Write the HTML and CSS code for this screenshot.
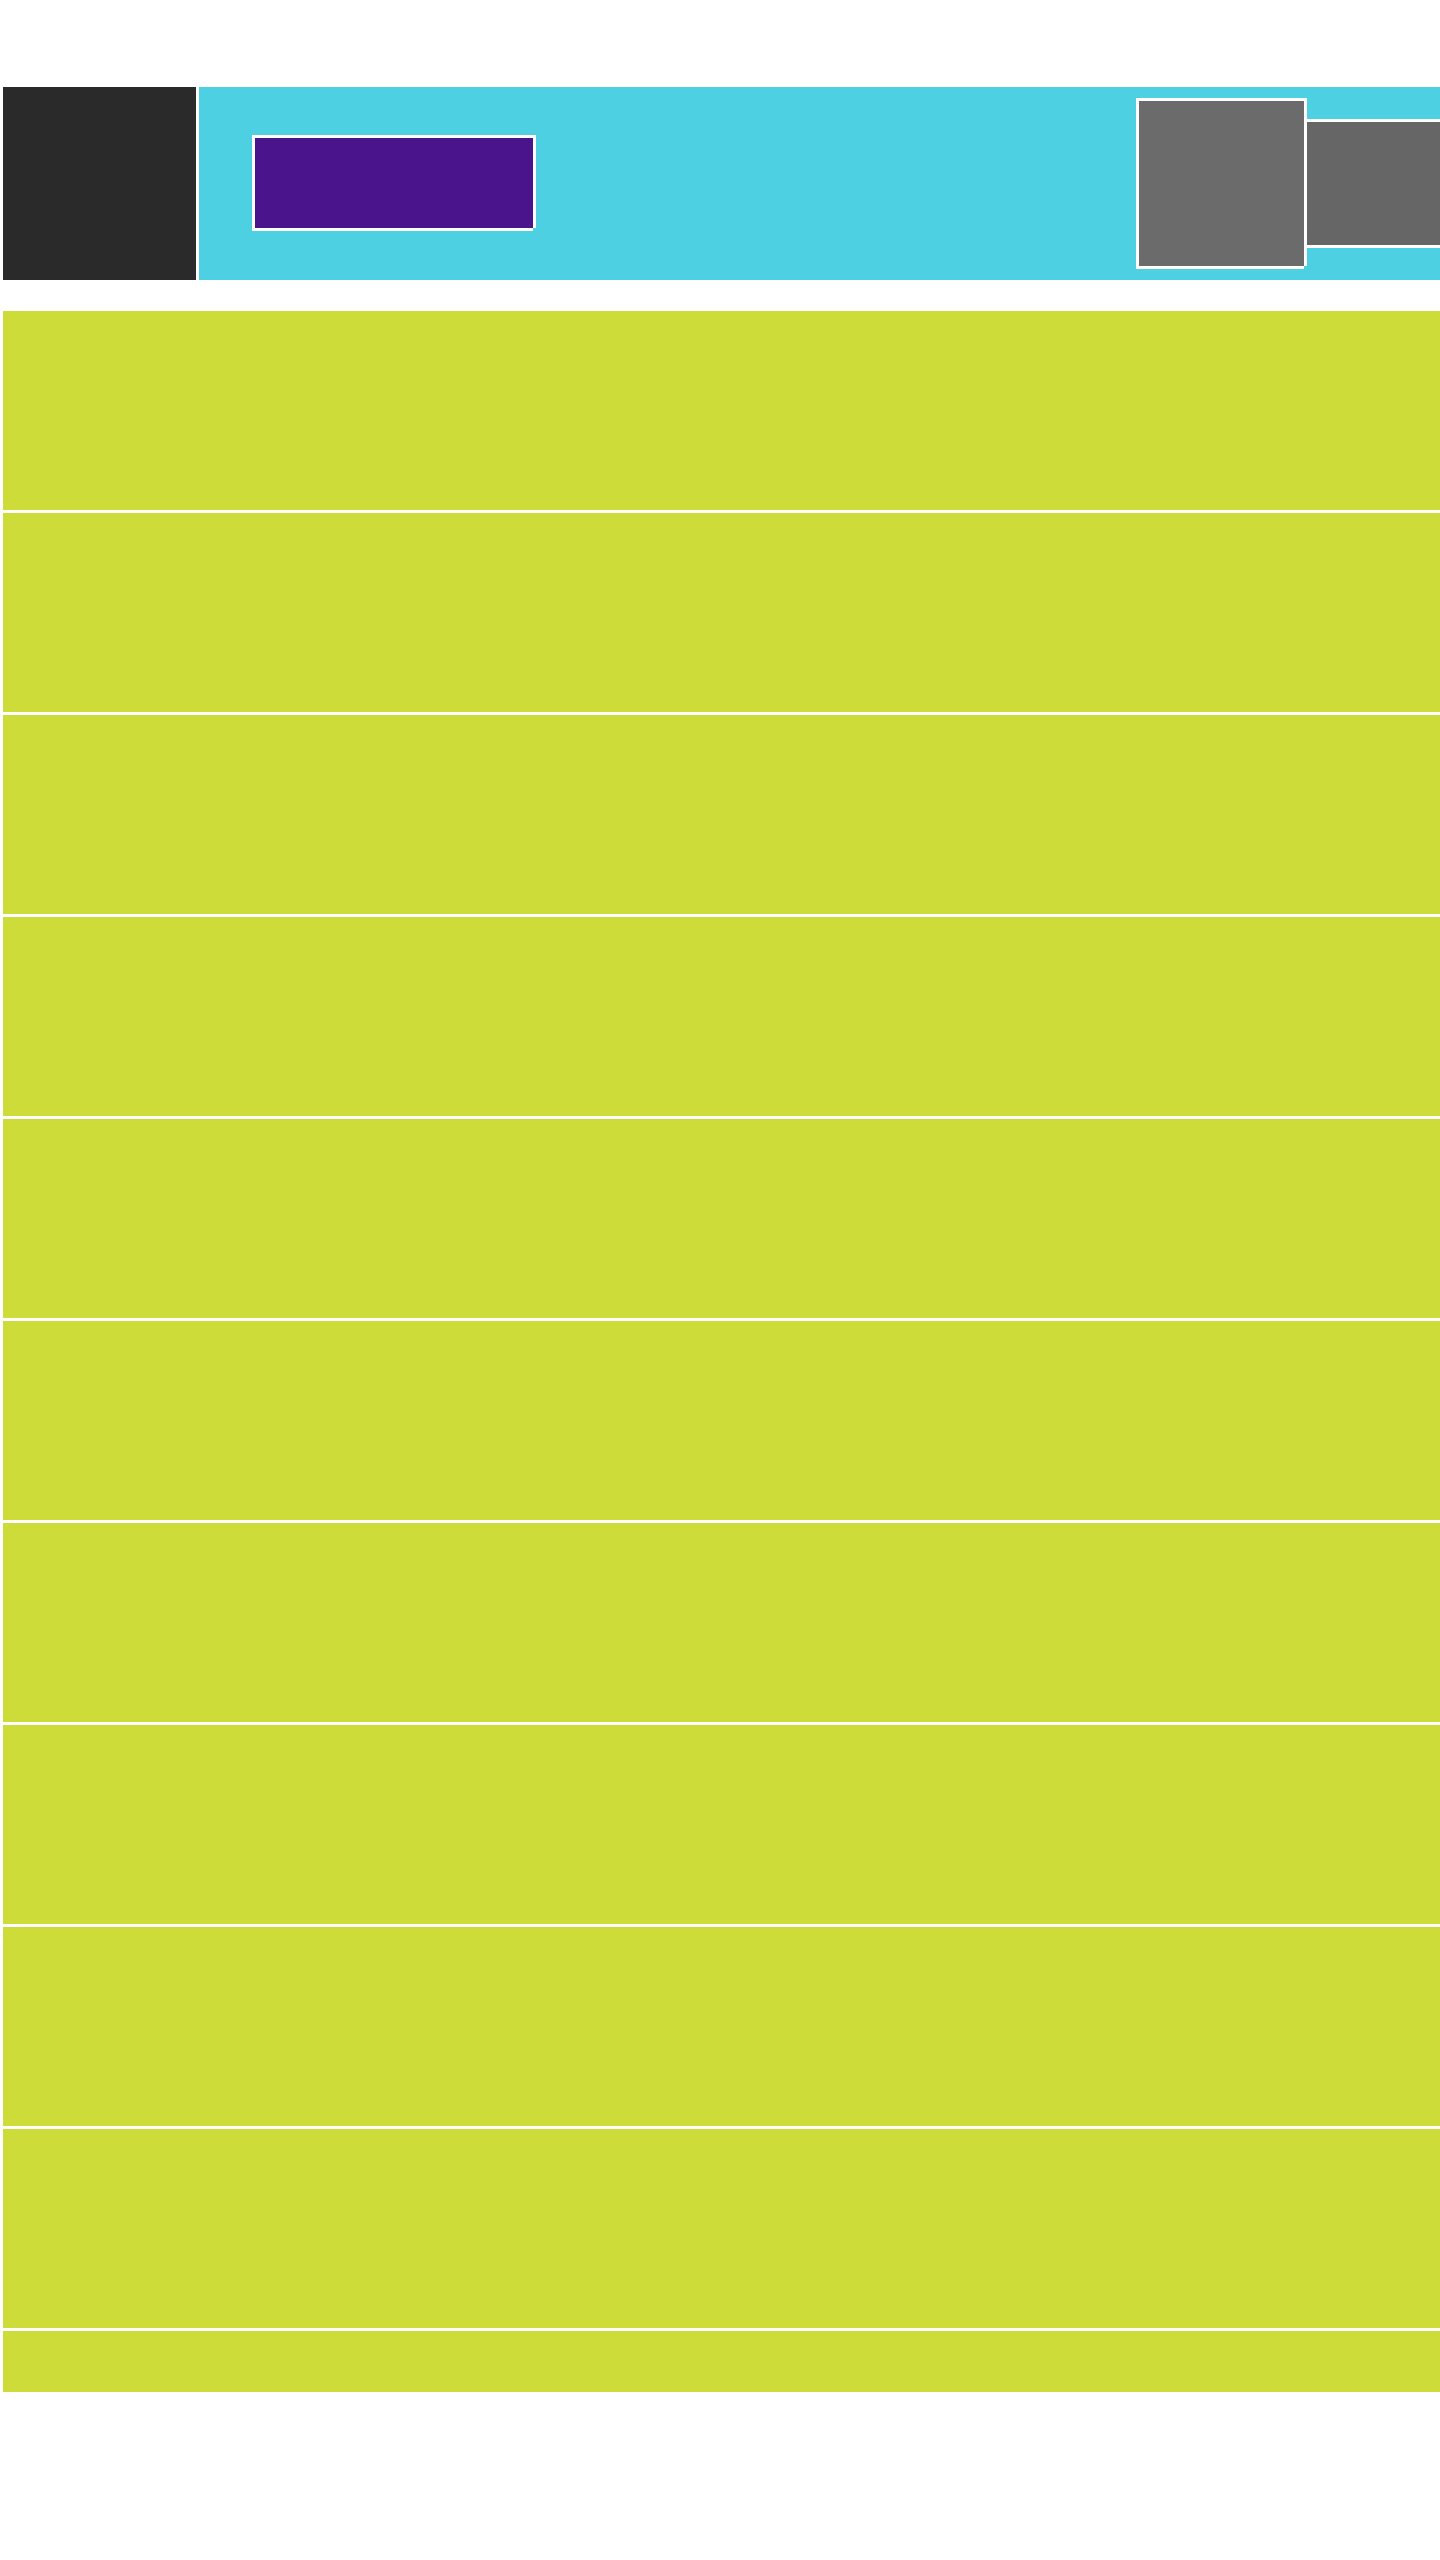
FILE: index.html
```html
<!DOCTYPE html>
<html lang="en">
<head>
<meta charset="utf-8">
<title>Layout</title>
<link rel="stylesheet" href="styles.css">
</head>
<body>
<div class="page">
  <header class="header">
    <div class="brand"></div>
    <div class="bar">
      <div class="button frame"></div>
      <div class="tools">
        <div class="tile frame"></div>
        <div class="tile-wide"></div>
      </div>
    </div>
  </header>
  <main class="list">
    <div class="row"></div>
    <div class="row"></div>
    <div class="row"></div>
    <div class="row"></div>
    <div class="row"></div>
    <div class="row"></div>
    <div class="row"></div>
    <div class="row"></div>
    <div class="row"></div>
    <div class="row"></div>
    <div class="row row-last"></div>
  </main>
</div>
</body>
</html>
```

FILE: styles.css
```css
html, body {
  margin: 0;
  padding: 0;
  background: #ffffff;
  overflow-x: hidden;
  font-family: "Liberation Sans", Arial, sans-serif;
}

.page {
  padding: 87px 0 0 3px;
}

.header {
  display: flex;
  height: 193px;
  overflow: hidden;
}

.brand {
  width: 193px;
  flex: 0 0 193px;
  background: #2a2a2a;
}

.bar {
  flex: 1;
  margin-left: 3px;
  background: #4dd0e1;
  display: flex;
  align-items: center;
  padding-left: 53px;
}

.frame {
  position: relative;
  border: 3px solid #ffffff;
}

.frame::after {
  content: "";
  position: absolute;
  right: -3px;
  bottom: -3px;
  width: 3px;
  height: 3px;
  background: #4dd0e1;
}

.button {
  width: 278px;
  height: 90px;
  background: #4a148c;
  margin-top: -1px;
}

.tools {
  margin-left: auto;
  display: flex;
  align-items: center;
}

.tile {
  width: 165px;
  height: 165px;
  background: #6b6b6b;
}

.tile-wide {
  width: 133px;
  height: 123px;
  background: #666666;
  border-top: 3px solid #ffffff;
  border-bottom: 3px solid #ffffff;
}

.list {
  margin-top: 31px;
  display: flex;
  flex-direction: column;
  gap: 3px;
}

.row {
  height: 199px;
  background: #cddc39;
}

.row-last {
  height: 61px;
}
```
